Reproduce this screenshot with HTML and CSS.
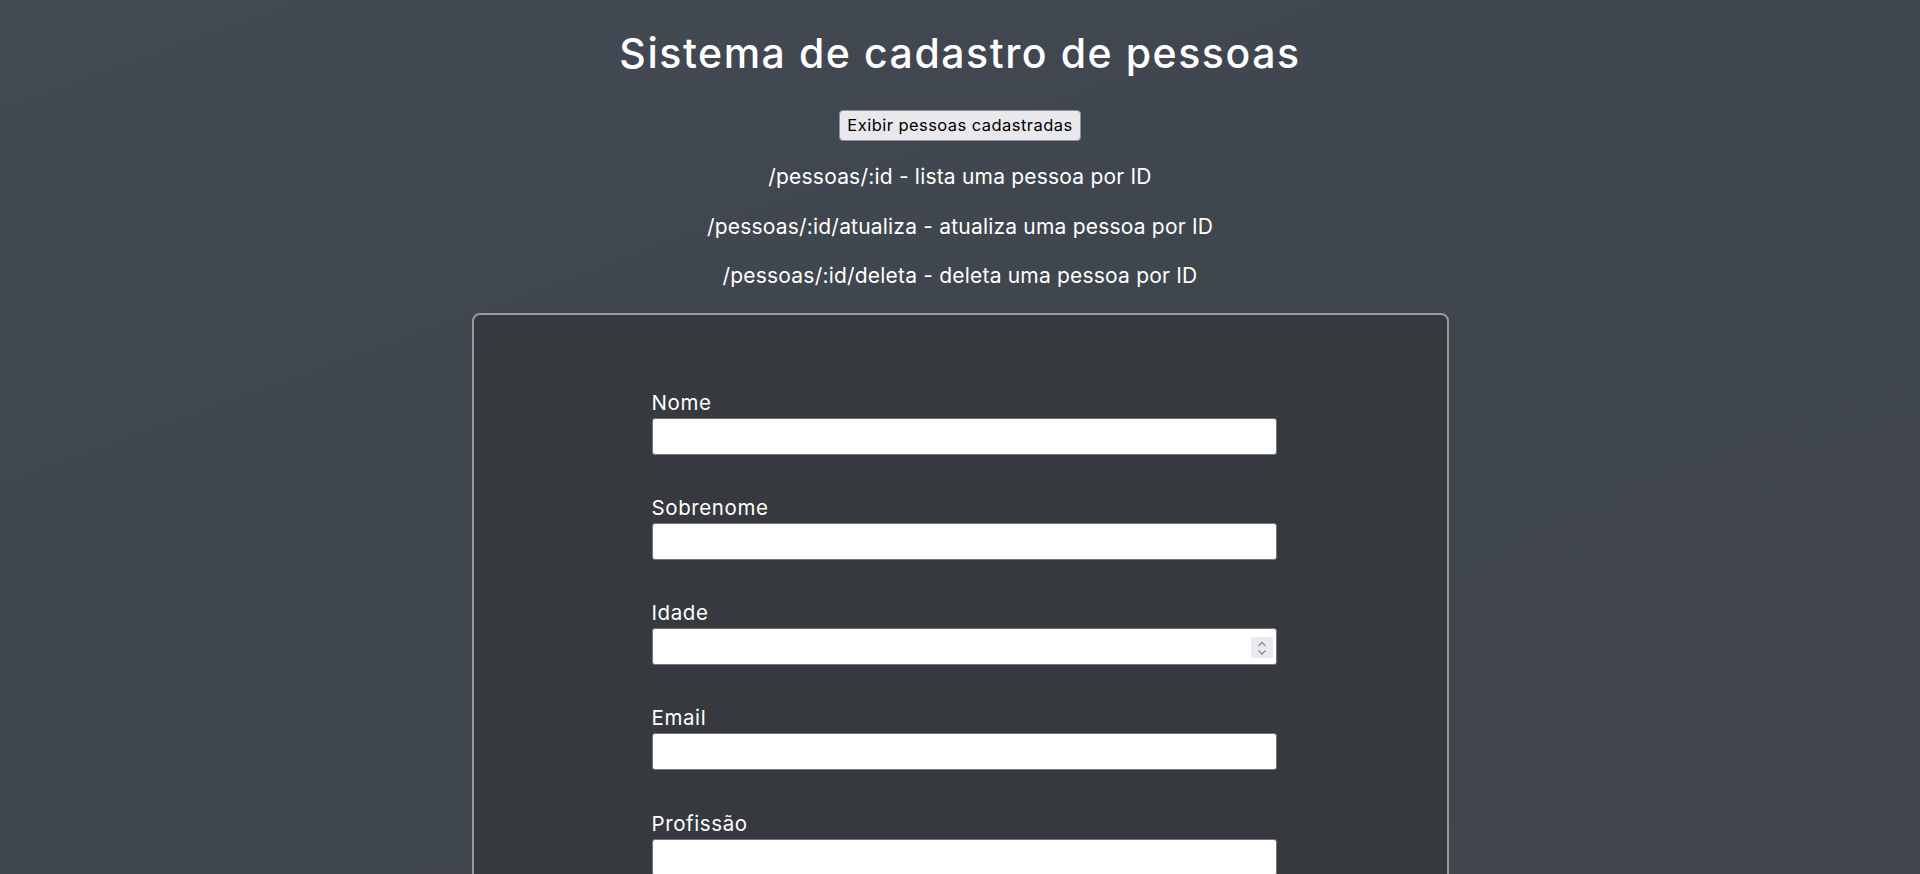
FILE: index.html
```html
<!DOCTYPE html>
<html lang="pt-BR">
<head>
<meta charset="utf-8">
<title>Sistema de cadastro de pessoas</title>
<link rel="stylesheet" href="styles.css">
</head>
<body>
<main class="page">
  <h1 class="title">Sistema de cadastro de pessoas</h1>
  <button class="btn-list" type="button">Exibir pessoas cadastradas</button>
  <p class="route">/pessoas/:id - lista uma pessoa por ID</p>
  <p class="route">/pessoas/:id/atualiza - atualiza uma pessoa por ID</p>
  <p class="route">/pessoas/:id/deleta - deleta uma pessoa por ID</p>
  <section class="card">
    <form class="form">
      <div class="field">
        <label class="label" for="nome">Nome</label>
        <input class="input" id="nome" type="text">
      </div>
      <div class="field">
        <label class="label" for="sobrenome">Sobrenome</label>
        <input class="input" id="sobrenome" type="text">
      </div>
      <div class="field">
        <label class="label" for="idade">Idade</label>
        <div class="input-wrap">
          <input class="input" id="idade" type="number">
          <span class="spin" aria-hidden="true">
            <svg width="22" height="21" viewBox="0 0 22 21">
              <polyline points="7.5,9 11,5.5 14.5,9" fill="none" stroke="#8c8c97" stroke-width="1.3"/>
              <polyline points="7.5,13.5 11,17 14.5,13.5" fill="none" stroke="#8c8c97" stroke-width="1.3"/>
            </svg>
          </span>
        </div>
      </div>
      <div class="field">
        <label class="label" for="email">Email</label>
        <input class="input" id="email" type="email">
      </div>
      <div class="field">
        <label class="label" for="profissao">Profissão</label>
        <input class="input" id="profissao" type="text">
      </div>
    </form>
  </section>
</main>
</body>
</html>
```
FILE: styles.css
```css
* { box-sizing: border-box; }

html, body {
  margin: 0;
  padding: 0;
}

body {
  min-height: 100vh;
  background: linear-gradient(160deg, #434a53 0%, #3f454d 50%, #41464e 100%);
  background-attachment: fixed;
  color: #ffffff;
  font-family: "Inter", "Open Sans", sans-serif;
}

.page {
  display: flex;
  flex-direction: column;
  align-items: center;
  padding-bottom: 60px;
}

.title {
  margin: 29px 0 0;
  font-size: 41px;
  line-height: 48px;
  font-weight: 500;
  letter-spacing: 1.55px;
}

.btn-list {
  margin-top: 33px;
  height: 31px;
  padding: 0 7px;
  font-family: inherit;
  font-size: 16.5px;
  letter-spacing: 0.45px;
  line-height: 29px;
  color: #000;
  background: #e9e9ed;
  border: 1px solid #8f8f9d;
  border-radius: 4px;
}

.route {
  margin: 19.5px 0 0;
  font-size: 21px;
  line-height: 30px;
  letter-spacing: 0.2px;
}

.btn-list + .route { margin-top: 21px; }

.card {
  margin-top: 21.5px;
  width: 977px;
  background: #36393e;
  border: 2px solid #9a9a9a;
  border-radius: 8px;
  padding: 73px 0 60px 178px;
}

.form {
  display: flex;
  flex-direction: column;
  gap: 38.25px;
  width: 625px;
}

.field {
  display: flex;
  flex-direction: column;
}

.label {
  font-size: 20.5px;
  line-height: 30px;
  letter-spacing: 0.6px;
}

.input-wrap {
  position: relative;
}

.input {
  display: block;
  height: 37px;
  width: 625px;
  border: 1px solid #767676;
  border-radius: 3px;
  background: #fff;
  font-family: inherit;
  font-size: 16px;
  padding: 0 6px;
}

.input[type="number"]::-webkit-inner-spin-button,
.input[type="number"]::-webkit-outer-spin-button {
  -webkit-appearance: none;
  margin: 0;
}

.spin {
  position: absolute;
  top: 9px;
  right: 4px;
  width: 22px;
  height: 21px;
  background: #e9e9ee;
  border-radius: 1px;
  display: flex;
}
```
